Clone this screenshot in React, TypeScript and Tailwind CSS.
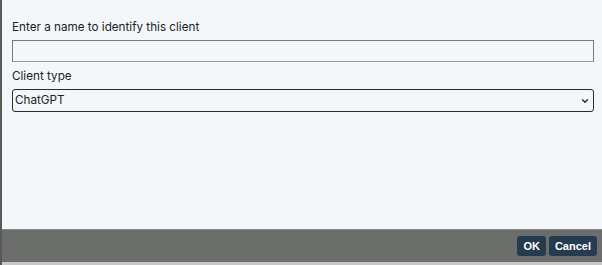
import { ChevronDown } from 'lucide-react';

export default function App() {
  return (
    <div className="w-[602px] h-[265px] flex flex-col bg-[#f3f7fa] border-l-2 border-[#5a5a5a] font-['Inter',sans-serif] text-[#222]">
      <main className="flex-1 px-[10px] pt-[19px]">
        <label className="block text-[11.7px] leading-[16px] mb-[5px]">Enter a name to identify this client</label>
        <input
          type="text"
          className="block w-[582px] h-[22px] bg-[#f3f7fa] border border-[#7a7a7a] border-b-[#9a9a9a] outline-none"
        />
        <label className="block text-[11.7px] leading-[16px] mt-[6px] mb-[5px]">Client type</label>
        <div className="relative w-[582px] h-[23px] border-[1.5px] border-[#2b2b2b] rounded-[3px] bg-[#f3f7fa] flex items-center px-[2px]">
          <span className="text-[11.7px] leading-none">ChatGPT</span>
          <ChevronDown className="absolute right-[3px] top-[6px] w-[10px] h-[10px] text-[#222]" strokeWidth={3} />
        </div>
      </main>
      <footer className="h-[36px] bg-[#6c6e6c] border-t border-[#8a8a8a] border-b-[3px] border-b-[#c8c8c8] flex items-center justify-end gap-[3px] pr-[5px]">
        <button className="h-[20px] px-[6px] rounded-[3px] bg-[#263a50] text-white text-[11px] font-bold font-['Liberation_Sans',Arial,sans-serif]">OK</button>
        <button className="h-[20px] px-[6px] rounded-[3px] bg-[#263a50] text-white text-[11px] font-bold font-['Liberation_Sans',Arial,sans-serif]">Cancel</button>
      </footer>
    </div>
  );
}
